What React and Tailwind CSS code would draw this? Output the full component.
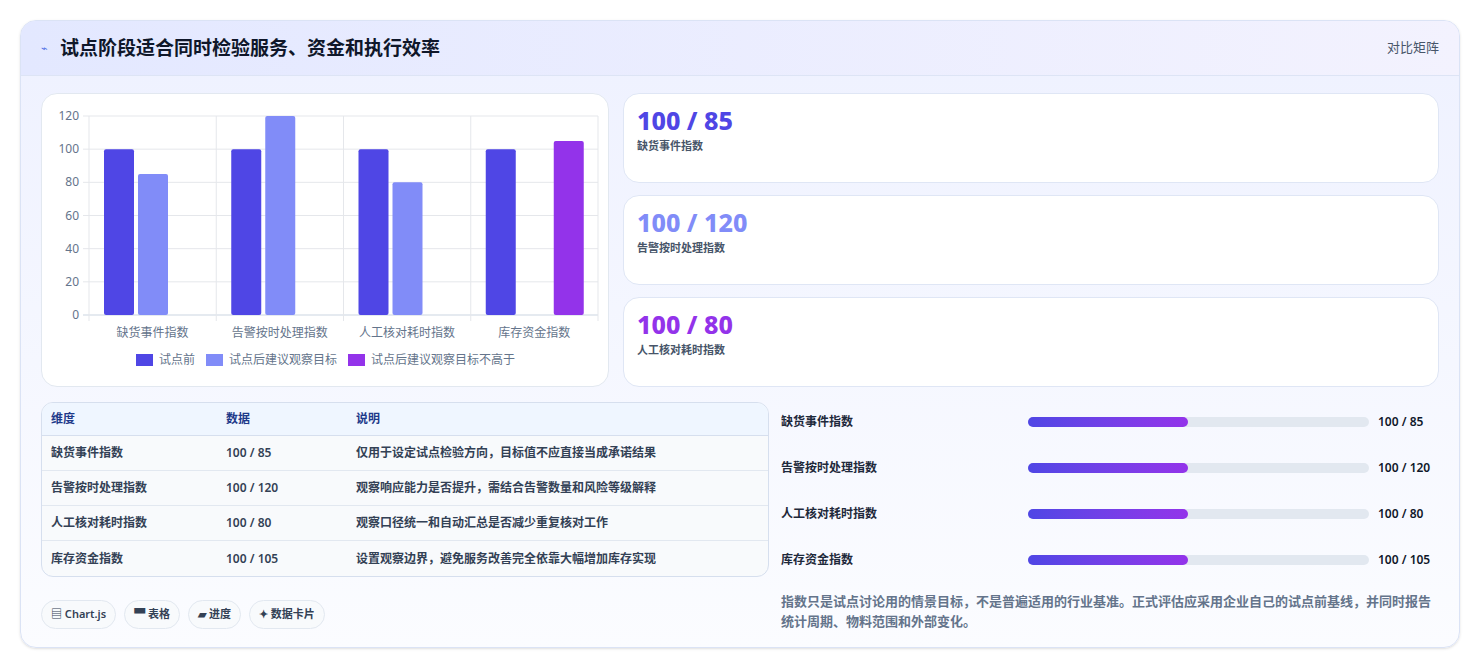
import React from 'react';

const metrics = [
  { name: '缺货事件指数', before: 100, after: 85, note: '仅用于设定试点检验方向，目标值不应直接当成承诺结果' },
  { name: '告警按时处理指数', before: 100, after: 120, note: '观察响应能力是否提升，需结合告警数量和风险等级解释' },
  { name: '人工核对耗时指数', before: 100, after: 80, note: '观察口径统一和自动汇总是否减少重复核对工作' },
  { name: '库存资金指数', before: 100, after: 105, note: '设置观察边界，避免服务改善完全依靠大幅增加库存实现' },
];

const cards = [
  { value: '100 / 85', label: '缺货事件指数', color: 'text-[#4f46e5]' },
  { value: '100 / 120', label: '告警按时处理指数', color: 'text-[#818cf8]' },
  { value: '100 / 80', label: '人工核对耗时指数', color: 'text-[#9333ea]' },
];

function BarChart() {
  const left = 47, top = 22, w = 509, h = 199;
  const y = (v) => top + h - (v / 120) * h;
  const cw = w / 4;
  return (
    <svg width="568" height="294" className="block">
      {[0, 20, 40, 60, 80, 100, 120].map((t) => (
        <g key={t}>
          <line x1={left - 6} x2={left + w} y1={y(t)} y2={y(t)} stroke={t === 0 ? '#cbd5e1' : '#e5e7eb'} />
          <text x={left - 10} y={y(t) + 4} textAnchor="end" fontSize="12" fill="#64748b">{t}</text>
        </g>
      ))}
      {[0, 1, 2, 3, 4].map((i) => (
        <line key={i} x1={left + i * cw} x2={left + i * cw} y1={top} y2={top + h + 6} stroke="#e5e7eb" />
      ))}
      {metrics.map((m, i) => {
        const gx = left + i * cw + 15;
        const last = i === 3;
        return (
          <g key={m.name}>
            <rect x={gx} y={y(m.before)} width="30" height={y(0) - y(m.before)} rx="2" fill="#4f46e5" />
            <rect x={last ? gx + 68 : gx + 34} y={y(m.after)} width="30" height={y(0) - y(m.after)} rx="2" fill={last ? '#9333ea' : '#818cf8'} />
            <text x={left + i * cw + cw / 2} y={top + h + 22} textAnchor="middle" fontSize="12" fill="#64748b">{m.name}</text>
          </g>
        );
      })}
      {[
        { x: 94, c: '#4f46e5', t: '试点前' },
        { x: 164, c: '#818cf8', t: '试点后建议观察目标' },
        { x: 306, c: '#9333ea', t: '试点后建议观察目标不高于' },
      ].map((l) => (
        <g key={l.t}>
          <rect x={l.x} y="260" width="17" height="12" fill={l.c} />
          <text x={l.x + 23} y="270" fontSize="12" fill="#64748b">{l.t}</text>
        </g>
      ))}
    </svg>
  );
}

export default function App() {
  return (
    <div className="w-[1480px] h-[670px] bg-white p-5" style={{ fontFamily: '"Noto Sans", "Noto Sans CJK SC", sans-serif' }}>
      <div className="h-[628px] rounded-2xl border border-[#dbe3f5] bg-gradient-to-b from-[#eef1ff] to-[#fbfcff] overflow-hidden shadow-sm">
        <div className="h-[55px] flex items-center justify-between px-5 border-b border-[#dde4f5] bg-gradient-to-r from-[#e3e8ff] to-[#f3f2fe]">
          <div className="flex items-center gap-3">
            <span className="text-[11px] text-[#4f6fe5]">⌁</span>
            <h1 className="text-[19px] font-bold text-[#0f172a]">试点阶段适合同时检验服务、资金和执行效率</h1>
          </div>
          <span className="text-[13px] text-[#475569]">对比矩阵</span>
        </div>
        <div className="p-5 pt-[17px]">
          <div className="flex gap-[14px]">
            <div className="w-[568px] h-[294px] rounded-2xl border border-[#e2e8f0] bg-white">
              <BarChart />
            </div>
            <div className="flex-1 flex flex-col gap-[12px]">
              {cards.map((c) => (
                <div key={c.label} className="h-[90px] rounded-2xl border border-[#dfe6f5] bg-white px-[13px] pt-[11px]">
                  <div className={`text-[25px] font-extrabold leading-[30px] ${c.color}`}>{c.value}</div>
                  <div className="text-[11px] font-semibold text-[#475569] mt-[3px]">{c.label}</div>
                </div>
              ))}
            </div>
          </div>
          <div className="flex gap-3 mt-[15px]">
            <div className="w-[728px]">
              <div className="rounded-xl border border-[#d6dfee] overflow-hidden bg-[#f8fafc]">
                <div className="grid grid-cols-[175px_130px_1fr] h-[33px] items-center px-[9px] bg-[#eff6ff] border-b border-[#d6dfee] text-[12px] font-semibold text-[#1e3a8a]">
                  <span>维度</span><span>数据</span><span>说明</span>
                </div>
                {metrics.map((m, i) => (
                  <div key={m.name} className={`grid grid-cols-[175px_130px_1fr] h-[35px] items-center px-[9px] text-[12px] font-semibold text-[#334155] ${i < 3 ? 'border-b border-[#e2e8f0]' : ''}`}>
                    <span>{m.name}</span><span>{m.before} / {m.after}</span><span>{m.note}</span>
                  </div>
                ))}
              </div>
              <div className="flex gap-2 mt-[23px]">
                {['▤ Chart.js', '▀ 表格', '▰ 进度', '✦ 数据卡片'].map((t) => (
                  <span key={t} className="h-[29px] px-[9px] flex items-center rounded-full border border-[#e2e8f0] bg-[#f8fafc] text-[11px] font-semibold text-[#334155]">{t}</span>
                ))}
              </div>
            </div>
            <div className="flex-1">
              <div className="flex flex-col gap-[26px] pt-[10px]">
                {metrics.map((m) => (
                  <div key={m.name} className="h-[20px] flex items-center text-[12px] font-semibold text-[#1e293b]">
                    <span className="w-[247px]">{m.name}</span>
                    <div className="w-[341px] h-[10px] rounded-full bg-[#e2e8f0]">
                      <div className="h-full w-[47%] rounded-full bg-gradient-to-r from-[#4f46e5] to-[#9333ea]" />
                    </div>
                    <span className="ml-[9px] text-[#0f172a]">{m.before} / {m.after}</span>
                  </div>
                ))}
              </div>
              <p className="mt-[21px] text-[13px] leading-[20px] font-semibold text-[#64748b]">
                指数只是试点讨论用的情景目标，不是普遍适用的行业基准。正式评估应采用企业自己的试点前基线，并同时报告统计周期、物料范围和外部变化。
              </p>
            </div>
          </div>
        </div>
      </div>
    </div>
  );
}
